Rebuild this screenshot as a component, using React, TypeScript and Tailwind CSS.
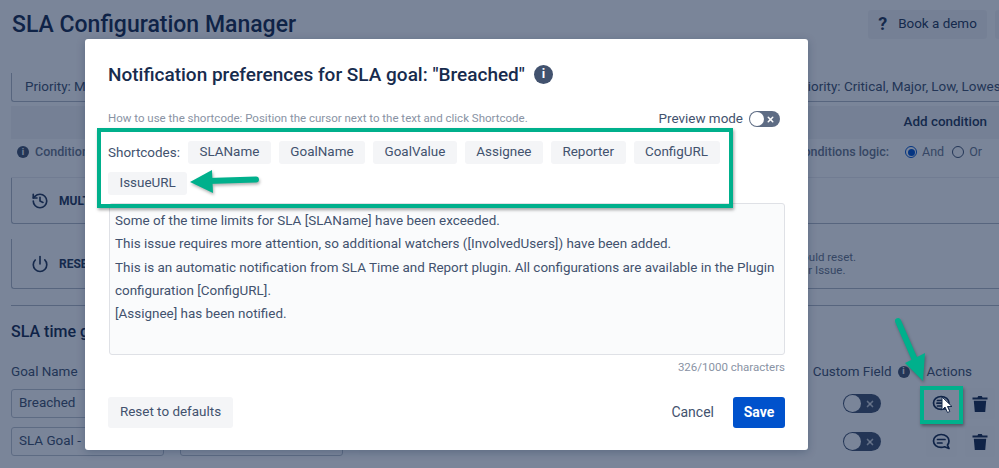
import { History, Power, X } from "lucide-react";

const font = { fontFamily: "Roboto, sans-serif" };

const shortcodes = ["SLAName", "GoalName", "GoalValue", "Assignee", "Reporter", "ConfigURL", "IssueURL"];

const InfoDot = ({ className }: { className: string }) => (
  <span className={`flex items-center justify-center rounded-full bg-[#42526e] text-white font-bold ${className}`}>i</span>
);

const Toggle = () => (
  <span className="flex h-[16px] w-[31px] items-center justify-between rounded-full bg-[#5e6c84] pl-[1px] pr-[5px]">
    <span className="h-[14px] w-[14px] rounded-full bg-white" />
    <X size={9} strokeWidth={4} className="text-white" />
  </span>
);

const RowToggle = () => (
  <span className="flex h-[19px] w-[38px] items-center justify-between rounded-full bg-[#42526e] pl-[1px] pr-[6px]">
    <span className="h-[17px] w-[17px] rounded-full bg-white" />
    <X size={10} strokeWidth={4} className="text-white/70" />
  </span>
);

const Chat = ({ lines }: { lines: 2 | 3 }) => (
  <svg width="19" height="18" viewBox="0 0 19 18" fill="none" stroke="#172b4d" strokeWidth="1.700" strokeLinecap="round" strokeLinejoin="round">
    <path d="M9.200 1.500c4.400 0 7.800 2.800 7.800 6.500 0 1.700-.6 3-1.600 4l1.600 3.500-4.400-1.700c-1.100.4-2.200.6-3.400.6-4.400 0-7.700-2.800-7.700-6.400s3.300-6.500 7.700-6.500z" />
    {lines === 2 ? <path d="M5.500 6.500h7.500M5.500 10h4.500" /> : <path d="M5.500 5.500h7.500M5 8.200h8.500M5.500 11h6" />}
  </svg>
);

const GoalRow = ({ name, marked }: { name: string; marked?: boolean }) => (
  <div className="flex h-[29px] items-center">
    <div className="flex h-full w-[153px] items-center rounded-[3px] border border-[#c1c7d0] pl-[7px] text-[13.440px] text-[#42526e]">{name}</div>
    <div className="ml-[16px] h-full w-[163px] rounded-[3px] border border-[#c1c7d0]" />
    <div className="ml-[16px] h-full w-[438px] rounded-[3px] bg-[#f4f5f7]/30" />
    <div className="ml-auto mr-[4px] flex items-center">
      <RowToggle />
      <span className={`ml-[45px] flex h-[31px] w-[31px] items-center justify-center rounded-[3px] ${marked ? "" : "bg-[#f4f5f7]/30"}`}>
        <Chat lines={marked ? 3 : 2} />
      </span>
      <span className="ml-[8px] flex h-[31px] w-[30px] items-center justify-center rounded-[3px] bg-[#f4f5f7]/30">
        <svg width="16" height="18" viewBox="0 0 16 18" fill="#172b4d"><path d="M.5 2.600h5L6.200 1h3.600l.7 1.600h5v2H.5zM1.800 5.800h12.400l-1 11.200H2.800z" /></svg>
      </span>
    </div>
  </div>
);

export default function App() {
  return (
    <div style={font} className="relative h-[468px] w-[999px] overflow-hidden bg-white text-[#172b4d]">
      {/* Page behind the dialog */}
      <div className="flex h-full flex-col pl-[11px]">
        <header className="flex h-[48px] items-center justify-between">
          <h1 className="ml-[1px] text-[23px] font-medium leading-none">SLA Configuration Manager</h1>
          <div className="flex items-center gap-[8px]">
            <div className="flex h-[29px] w-[119px] items-center justify-center gap-[11px] rounded-[3px] bg-[#ebecf0]/50 text-[13.440px] text-[#253858]">
              <span className="text-[18px] font-bold leading-none">?</span>
              Book a demo
            </div>
            <div className="h-[29px] w-[4px] rounded-l-[3px] bg-[#ebecf0]/50" />
          </div>
        </header>
        <div className="mt-[25px] flex h-[29px] items-center justify-between overflow-hidden whitespace-nowrap rounded-bl-[3px] border-b border-l border-[#b3bac5] pl-[13px] text-[13.440px] text-[#42526e]">
          <span>Priority: Major</span>
          <span className="-mr-[6px]">Priority: Critical, Major, Low, Lowest</span>
        </div>
        <div className="mt-[4px] flex h-[33px] items-center justify-end bg-[#f4f5f7] pr-[12px] text-[13.440px] font-medium text-[#253858]">Add condition</div>
        <div className="flex h-[39px] items-start justify-between border-b border-[#ebecf0] pt-[6px] text-[12.500px] font-medium leading-[14px] text-[#6b778c]">
          <span className="ml-[6px] flex items-center gap-[6px]">
            <InfoDot className="h-[12px] w-[12px] text-[9px]" />
            Conditions
          </span>
          <span className="mr-[17px] flex items-center">
            Conditions logic:
            <span className="ml-[16px] flex h-[12px] w-[12px] items-center justify-center rounded-full border border-[#0052cc]"><span className="h-[7px] w-[7px] rounded-full bg-[#0052cc]" /></span>
            <span className="ml-[5px] font-normal">And</span>
            <span className="ml-[8px] h-[12px] w-[12px] rounded-full border border-[#42526e]" />
            <span className="ml-[5px] font-normal">Or</span>
          </span>
        </div>
        <div className="flex h-[46px] items-center rounded-bl-[3px] border-b border-l border-[#b3bac5] pl-[19px] text-[12px] font-bold text-[#253858]">
          <History size={18} strokeWidth={2.200} className="mr-[10px]" />
          MULTI
        </div>
        <div className="mt-[15px] flex h-[50px] items-center justify-between rounded-bl-[3px] border-b border-l border-[#b3bac5] pl-[19px] text-[12px]">
          <span className="flex items-center font-bold text-[#253858]">
            <Power size={18} strokeWidth={2.200} className="mr-[10px]" />
            RESET
          </span>
          <span className="w-[209px] text-[11.500px] leading-[13px] text-[#6b778c]">
            <span className="block">should reset.</span>
            <span className="block">your Issue.</span>
          </span>
        </div>
        <div className="mt-[16px] h-px bg-[#b3bac5]" />
        <h2 className="mt-[17px] text-[16px] font-medium leading-[18px] text-[#172b4d]">SLA time goals</h2>
        <div className="mt-[22px] flex h-[18px] items-center text-[13.440px] text-[#42526e]">
          <span>Goal Name</span>
          <span className="ml-auto mr-[27px] flex items-center">
            Custom Field
            <InfoDot className="ml-[6px] h-[12px] w-[12px] text-[9px]" />
            <span className="ml-[17px]">Actions</span>
          </span>
        </div>
        <div className="mt-[8px] flex flex-col gap-[9px]">
          <GoalRow name="Breached" marked />
          <GoalRow name="SLA Goal - 1" />
        </div>
      </div>

      <div className="absolute inset-0 bg-[rgba(9,30,66,0.54)]" />

      {/* Dialog */}
      <div className="absolute left-[85px] top-[39px] flex h-[411px] w-[723px] flex-col rounded-[3px] bg-white px-[23px] shadow-[0_2px_8px_rgba(9,30,66,0.25)]">
        <div className="mt-[24px] flex h-[22px] items-center">
          <h3 className="text-[19px] font-medium leading-none text-[#172b4d]">Notification preferences for SLA goal: "Breached"</h3>
          <InfoDot className="ml-[9px] h-[19px] w-[19px] text-[13px]" />
        </div>
        <div className="mt-[25px] flex h-[18px] items-center justify-between pr-[5px]">
          <span className="text-[11.500px] text-[#8993a4]">How to use the shortcode: Position the cursor next to the text and click Shortcode.</span>
          <span className="flex items-center gap-[6px] text-[13.440px] text-[#42526e]">Preview mode <Toggle /></span>
        </div>
        <div className="mt-[13px] flex w-[620px] flex-wrap items-center gap-x-[8px] gap-y-[8px]">
          <span className="text-[13.440px] leading-[23px] text-[#42526e]">Shortcodes:</span>
          {shortcodes.map((code) => (
            <span key={code} className="flex h-[23px] items-center rounded-[3px] bg-[#f4f5f7] px-[11.500px] text-[13.440px] text-[#42526e]">{code}</span>
          ))}
        </div>
        <div className="ml-[1px] mt-[8px] h-[152px] w-[676px] rounded-[3px] border border-[#dfe1e6] bg-[#fafbfc] px-[5px] pt-[5px] text-[13.440px] leading-[23.300px] text-[#42526e]">
          <p>Some of the time limits for SLA [SLAName] have been exceeded.</p>
          <p>This issue requires more attention, so additional watchers ([InvolvedUsers]) have been added.</p>
          <p>This is an automatic notification from SLA Time and Report plugin. All configurations are available in the Plugin configuration [ConfigURL].</p>
          <p>[Assignee] has been notified.</p>
        </div>
        <div className="mt-[5px] text-right text-[11.500px] leading-[14px] text-[#8993a4]">326/1000 characters</div>
        <div className="mt-[23px] flex items-center">
          <span className="flex h-[31px] w-[125px] items-center justify-center rounded-[3px] bg-[#f4f5f7] text-[13.440px] text-[#42526e]">Reset to defaults</span>
          <span className="ml-auto text-[14px] text-[#42526e]">Cancel</span>
          <span className="ml-[19px] flex h-[31px] w-[52px] items-center justify-center rounded-[3px] bg-[#0052cc] text-[14px] font-bold text-white">Save</span>
        </div>
      </div>

      {/* Annotations drawn over the screenshot */}
      <div className="absolute left-[97px] top-[128px] h-[80px] w-[636px] border-[4px] border-[#00b08c] shadow-[1px_2px_3px_rgba(0,0,0,0.35)]" />
      <div className="absolute left-[920px] top-[386px] h-[38px] w-[43px] border-[4px] border-[#00b08c] shadow-[1px_2px_3px_rgba(0,0,0,0.35)]" />
      <svg className="pointer-events-none absolute left-0 top-0" width="999" height="468" viewBox="0 0 999 468" style={{ filter: "drop-shadow(1px 2px 1.500px rgba(0,0,0,0.3))" }}>
        <line x1="208" y1="181" x2="256" y2="179.500" stroke="#00b08c" strokeWidth="6" strokeLinecap="round" />
        <path d="M190 182 L212 170 L213 193 Z" fill="#00b08c" />
        <line x1="898" y1="321" x2="915" y2="360" stroke="#00b08c" strokeWidth="6" strokeLinecap="round" />
        <path d="M923 381 L905 363 L925 353 Z" fill="#00b08c" />
      </svg>
      <svg className="absolute left-[941px] top-[396px]" width="13" height="18" viewBox="0 0 13 18">
        <path d="M1 1v13l3-3 2.500 5.500 2.300-1L6.500 10.500H11z" fill="white" stroke="#172b4d" strokeWidth="1" />
      </svg>
    </div>
  );
}
